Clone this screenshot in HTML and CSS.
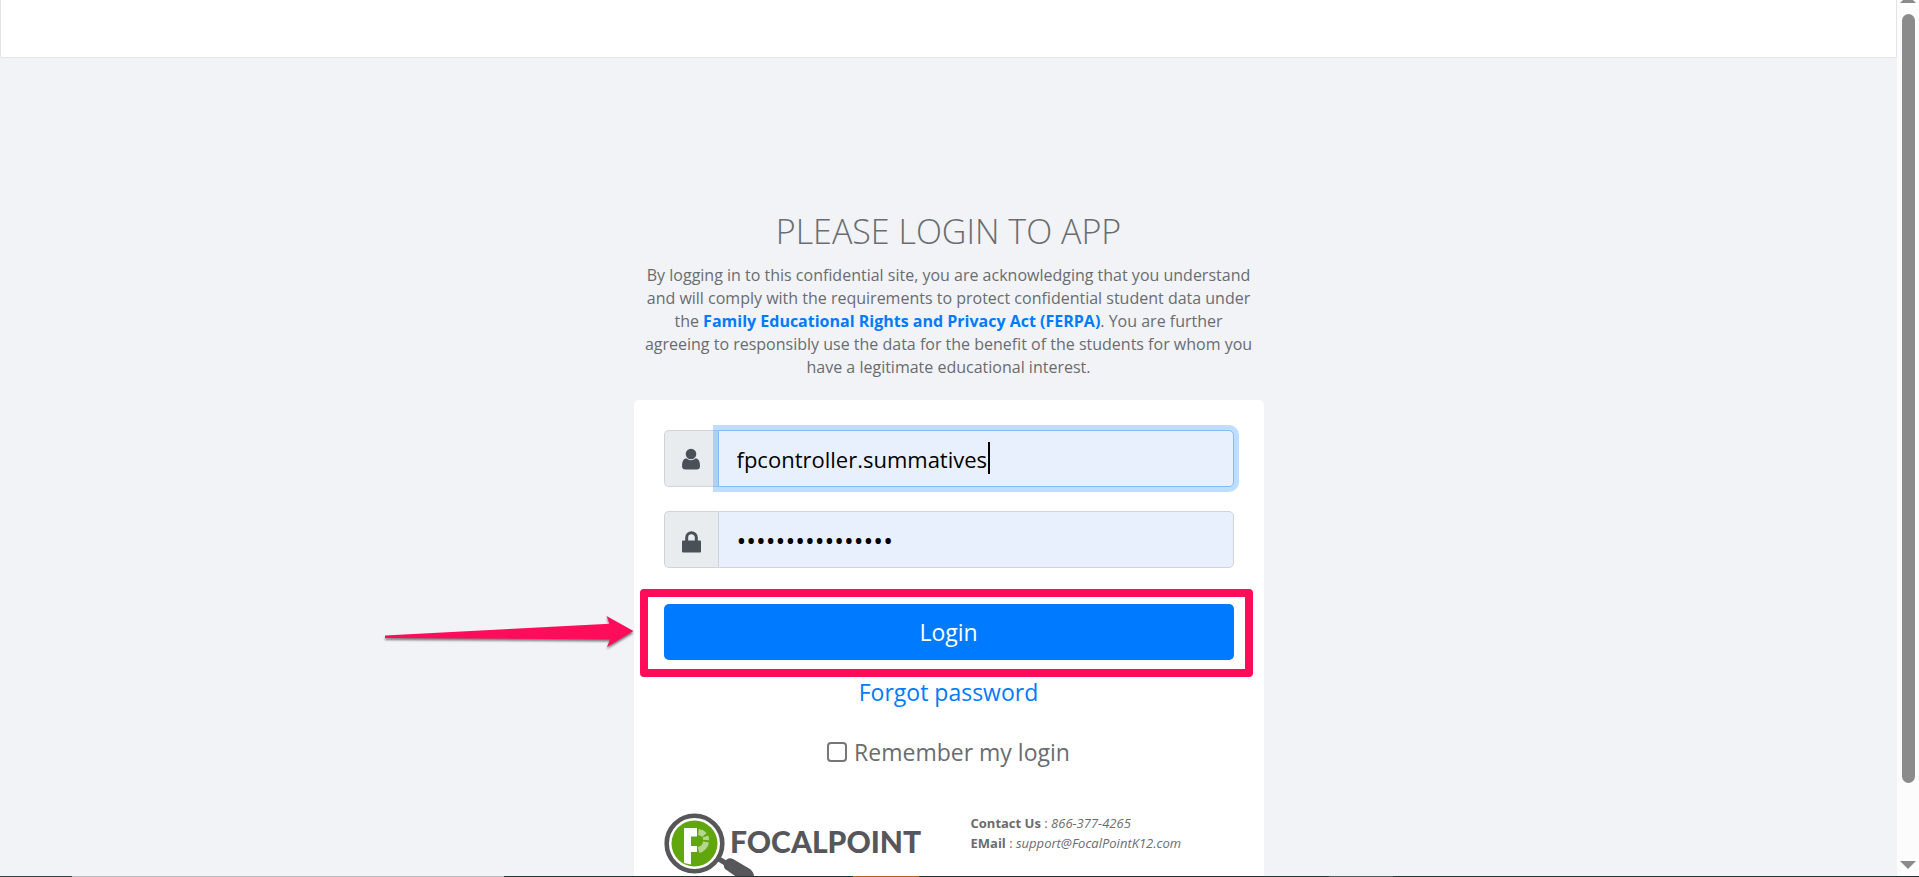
FILE: index.html
```html
<!DOCTYPE html>
<html lang="en">
<head>
    <meta charset="UTF-8">
    <meta name="viewport" content="width=device-width, initial-scale=1.0">
    <title>Login</title>
    <link rel="stylesheet" href="styles.css">
</head>
<body>
    <div class="window">
        <div class="page">
            <header class="topbar"></header>

            <main class="login-container">
                <div class="intro">
                    <h1>PLEASE LOGIN TO APP</h1>
                    <p>By logging in to this confidential site, you are acknowledging that you understand and will comply with the requirements to protect confidential student data under the <a href="#">Family Educational Rights and Privacy Act (FERPA)</a>. You are further agreeing to responsibly use the data for the benefit of the students for whom you have a legitimate educational interest.</p>
                </div>

                <div class="panel">
                    <form onsubmit="return false">
                        <div class="input-group">
                            <label class="addon" for="username" aria-label="Username">
                                <svg width="18" height="22" viewBox="0 0 18 22" fill="#495057">
                                    <circle cx="9" cy="6" r="5.3"/>
                                    <path d="M4.2 10.2 Q9 14.2 13.8 10.2 Q18 11 18 18 Q18 21.5 14.5 21.5 H3.5 Q0 21.5 0 18 Q0 11 4.2 10.2Z"/>
                                </svg>
                            </label>
                            <input class="focused" type="text" id="username" value="fpcontroller.summatives">
                            <span class="caret"></span>
                        </div>

                        <div class="input-group">
                            <label class="addon" for="password" aria-label="Password">
                                <svg class="lock" width="19" height="22" viewBox="0 0 19 22">
                                    <path d="M4.7 10 V6.5 A4.8 4.8 0 0 1 14.3 6.5 V10" fill="none" stroke="#495057" stroke-width="3"/>
                                    <rect y="9.5" width="19" height="12" rx="1" fill="#495057"/>
                                </svg>
                            </label>
                            <input type="password" id="password" value="summatives123456">
                        </div>

                        <div class="login-row">
                            <button class="button" type="submit">Login</button>
                            <div class="highlight"></div>
                            <svg class="arrow" width="252" height="40" viewBox="0 0 252 40">
                                <path d="M1 21.5 L225.5 9.7 L222.5 2 L249.5 17 L223 33 L226 25.5 L1 24Z" fill="#ff0d5b"/>
                            </svg>
                        </div>

                        <a class="forgot" href="#">Forgot password</a>

                        <div class="remember">
                            <input type="checkbox" id="remember">
                            <label for="remember">Remember my login</label>
                        </div>
                    </form>

                    <div class="contact">
                        <svg class="logo" width="270" height="80" viewBox="0 0 270 80">
                            <path d="M50 43 L63 51" stroke="#57575b" stroke-width="5"/>
                            <path d="M60 54 Q59 49 62 47 Q65 44 69 46 L86 56 Q92 61 89 67 Q84 72 77 67 L61 56Z" fill="#57575b"/>
                            <circle cx="30.5" cy="30.5" r="27.8" fill="#fff" stroke="#57575b" stroke-width="4.6"/>
                            <circle cx="30.5" cy="30.5" r="23" fill="#61a60e"/>
                            <path d="M20 15 H33 V23.5 H27 V33 H33 V39 H27 V51.5 L20 50Z" fill="#fff"/>
                            <g fill="none" stroke="#b5d68f" stroke-width="6">
                                <path d="M34.5 19 A9.500 9.500 0 0 1 40.500 22"/>
                                <path d="M41.500 23.500 A9.500 9.500 0 0 1 42 27"/>
                                <path d="M42 29 A9.500 9.500 0 0 1 34.500 37"/>
                            </g>
                            <text class="logo-text" x="66" y="40">FOCALPOINT</text>
                        </svg>
                        <address>
                            <div><strong>Contact Us</strong> <span>:</span> 866-377-4265</div>
                            <div><strong>EMail</strong> <span>:</span> support@FocalPointK12.com</div>
                        </address>
                    </div>
                </div>
            </main>
        </div>

        <div class="scrollbar">
            <svg width="16" height="8" viewBox="0 0 16 8"><path d="M0 3 L3 0 H13 L16 3Z" fill="#8b8b8b"/></svg>
            <div class="thumb"></div>
            <svg width="16" height="8" viewBox="0 0 16 8"><path d="M0 0 L8 8 L16 0Z" fill="#8b8b8b"/></svg>
        </div>
    </div>
    <div class="taskbar"></div>
</body>
</html>
```
FILE: styles.css
```css
* {
    margin: 0;
    padding: 0;
    box-sizing: border-box;
}

body {
    font-family: "Segoe UI", "Open Sans", "Noto Sans", sans-serif;
    font-size: 16px;
    color: #6a6c6f;
    background-color: #f1f3f7;
    height: 100vh;
    display: flex;
    flex-direction: column;
    overflow: hidden;
}

a {
    color: #007bff;
    text-decoration: none;
}

.window {
    display: flex;
    flex: 1;
    min-height: 0;
}

.page {
    flex: 1;
    overflow: hidden;
}

.topbar {
    height: 58px;
    background-color: #fff;
    border: 1px solid #e1e4e8;
    border-top: none;
    border-radius: 0 0 2px 2px;
}

.login-container {
    max-width: 630px;
    margin: 0 auto;
    padding-top: 150px;
}

.intro {
    text-align: center;
    padding: 0 10px;
    margin-bottom: 21px;
}

h1 {
    font-size: 34px;
    font-weight: 300;
    line-height: 46px;
    margin-bottom: 10px;
}

.intro p {
    line-height: 23px;
}

.intro a {
    font-weight: 700;
}

.panel {
    background-color: #fff;
    border-radius: 5px;
    padding: 30px;
    font-size: 23px;
}

.input-group {
    position: relative;
    display: flex;
    height: 57px;
    margin-bottom: 24px;
}

.addon {
    width: 54px;
    display: flex;
    align-items: center;
    justify-content: center;
    background-color: #e9ecef;
    border: 1px solid #ced4da;
    border-right: none;
    border-radius: 5px 0 0 5px;
}

.addon .lock {
    margin-top: 5px;
}

.input-group input {
    flex: 1;
    min-width: 0;
    padding: 0 18px;
    font-family: inherit;
    font-size: 22px;
    color: #000;
    background-color: #e8f0fe;
    border: 1px solid #ced4da;
    border-radius: 0 5px 5px 0;
    outline: none;
}

.input-group input[type="password"] {
    font-size: 26px;
}

.input-group .focused {
    border-color: #80bdff;
    box-shadow: 0 0 0 5px rgba(0, 123, 255, 0.25);
}

.caret {
    position: absolute;
    left: 324px;
    top: 12px;
    width: 2px;
    height: 32px;
    background-color: #000;
}

.login-row {
    position: relative;
    margin-top: 36px;
}

.button {
    display: block;
    width: 100%;
    height: 56px;
    font-family: inherit;
    font-size: 23px;
    color: #fff;
    background-color: #007bff;
    border: none;
    border-radius: 5px;
    cursor: pointer;
}

.highlight {
    position: absolute;
    top: -15px;
    right: -19px;
    bottom: -17px;
    left: -24px;
    border: 8px solid #ff0d5b;
    border-radius: 4px;
    pointer-events: none;
}

.arrow {
    position: absolute;
    top: 10px;
    left: -280px;
    filter: drop-shadow(0 2px 1px rgba(0, 0, 0, 0.5));
}

.forgot {
    display: block;
    text-align: center;
    line-height: 32px;
    margin-top: 16px;
}

.remember {
    display: flex;
    align-items: center;
    justify-content: center;
    gap: 7px;
    line-height: 32px;
    margin-top: 28px;
}

.remember input {
    width: 20px;
    height: 20px;
    appearance: none;
    background-color: #fff;
    border: 2px solid #767676;
    border-radius: 4px;
}

.remember input:checked {
    background-color: #007bff;
}

.contact {
    display: flex;
    gap: 37px;
    margin-top: 45px;
}

.logo-text {
    font-family: Lato, sans-serif;
    font-size: 30px;
    font-weight: 900;
    fill: #57575b;
}

address {
    font-size: 13px;
    line-height: 20px;
}

address strong,
address span {
    font-style: normal;
}

.scrollbar {
    width: 22px;
    background-color: #fcfcfc;
    display: flex;
    flex-direction: column;
    align-items: center;
    padding-bottom: 7px;
}

.thumb {
    flex: 1;
    width: 13px;
    margin: 6px 0 78px;
    background-color: #8b8b8b;
    border-radius: 7px;
}

.taskbar {
    height: 1px;
    background: linear-gradient(to right, #2f4349 72px, #b8bfbb 72px, #b8bfbb 504px, #1c3636 504px, #1c3636 853px, #b5651d 853px, #b5651d 919px, #1c3636 919px, #1c3636 1329px, #4a5c5c 1329px, #4a5c5c 1393px, #1c3636 1393px);
}
```
